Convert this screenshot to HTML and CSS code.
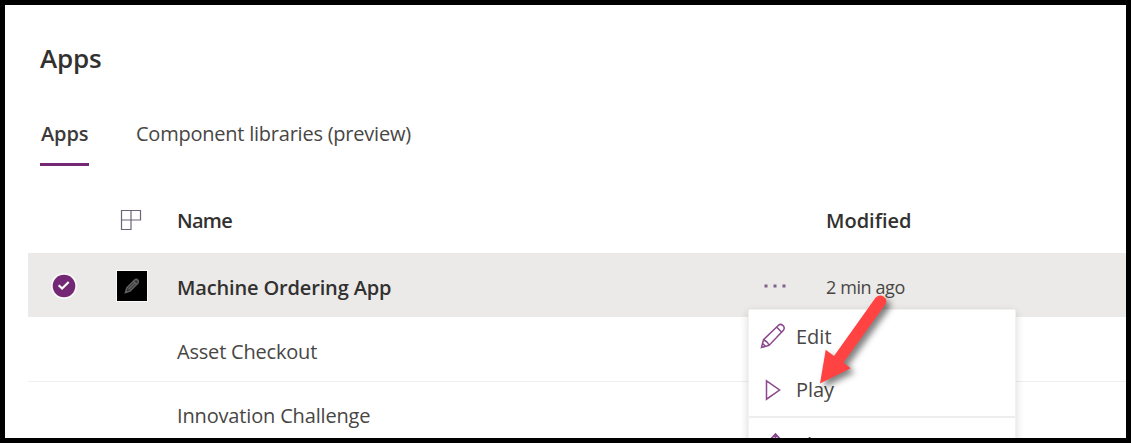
FILE: index.html
```html
<!DOCTYPE html>
<html lang="en">
<head>
<meta charset="utf-8">
<title>Apps</title>
<link rel="stylesheet" href="styles.css">
</head>
<body>
<main class="frame">
  <h1 class="title">Apps</h1>
  <nav class="tabs">
    <a class="tab tab-active">Apps</a>
    <a class="tab tab-preview">Component libraries (preview)</a>
  </nav>
  <section class="table">
    <div class="row head">
      <span></span>
      <svg class="type-icon" width="22" height="22" viewBox="0 0 22 22"><path d="M1.500 1.500H20.500V11H1.500ZM11 1.500V20.500H1.500V11" fill="none" stroke="#6b6478" stroke-width="1.200"/></svg>
      <span class="h-name">Name</span><span></span><span class="h-mod">Modified</span>
    </div>
    <div class="row selected">
      <svg class="check" width="28" height="28" viewBox="0 0 28 28"><circle cx="14" cy="14" r="13" fill="#fafafa"/><circle cx="14" cy="14" r="11.300" fill="#742774"/><path d="M8.700 13.200l3.400 3.300 6.600-6.500" fill="none" stroke="#fff" stroke-width="2.200"/></svg>
      <svg class="app-icon" width="32" height="32" viewBox="0 0 32 32"><path fill="#fafafa" d="M0 0h32v32H0z"/><path fill="#000" d="M1 1h30v30H1z"/><path d="M9.500 22.500l1.300-4.600 8-8q1.700-1.100 3 .2t.2 3l-8 8z" fill="#333" stroke="#606060" stroke-width="1.500"/><path d="M17.500 11.200l3.300 3.300M12.500 19.300l6.600-6.500" fill="none" stroke="#666" stroke-width="1.200"/></svg>
      <span class="name n1">Machine Ordering App</span>
      <svg class="dots" width="26" height="4" viewBox="0 0 26 4"><path d="M2.500 .5h3v3h-3zM11.500 .5h3v3h-3zM20.500 .5h3v3h-3z" fill="#80608a"/></svg>
      <span class="name when">2 min ago</span>
    </div>
    <div class="row line"><span></span><span></span><span class="name n2">Asset Checkout</span></div>
    <div class="row last"><span></span><span></span><span class="name n3">Innovation Challenge</span></div>
  </section>
  <div class="menu">
    <div class="item edit">
      <svg width="26" height="26" viewBox="0 0 26 26"><path d="M1.500 24.500l2-7.800L18.500 2.200q2-1.800 4.500.4 2.200 2.300.4 4.600L9 22.400zM3.500 16.700q3.800 1.500 5.500 5.700M16.700 4.100l4.900 5.200M2.700 20.500l2.700 2.800" fill="none" stroke="#8b478c" stroke-width="1.500"/></svg>
      <span>Edit</span>
    </div>
    <div class="item play">
      <svg width="26" height="26" viewBox="0 0 26 26"><path d="M6.500 3.800L19.600 13 6.500 22.200z" fill="none" stroke="#8b478c" stroke-width="1.500"/></svg>
      <span>Play</span>
    </div>
    <div class="item share">
      <svg width="26" height="26" viewBox="0 0 26 26"><path d="M10.500 7.500l5-5.500 5 5.500M15.500 2v15M10 11H4v13h18V11" fill="none" stroke="#8b478c" stroke-width="1.800"/></svg>
      <span>Share</span>
    </div>
  </div>
  <svg class="arrow" width="100" height="110" viewBox="0 0 100 110"><path d="M75.500 0.700Q79.500-3 83.500-.4 88 2.800 85.500 7.200L43.500 65.500 50.700 71.200 20 86.500 25.700 52.700 34 59z" fill="#ff4343"/></svg>
</main>
</body>
</html>
```
FILE: styles.css
```css
* { box-sizing: border-box; }
body { margin: 0; background: #fff; color: #484644; font: 20px/28px "Open Sans", "Noto Sans", sans-serif; }
.frame { position: relative; height: 443px; border: 5px solid #000; padding: 34px 0 0 23px; overflow: hidden; background: #fff; white-space: nowrap; }
.title { margin: 0 0 0 12px; font-size: 26px; line-height: 38px; font-weight: 600; color: #323130; letter-spacing: -.2px; }
.tabs { display: flex; gap: 47px; margin: 37px 0 0 12px; height: 52px; }
.tab { height: 52px; line-height: 40px; }
.tab-active { width: 49px; padding-left: 1px; font-weight: 600; border-bottom: 3px solid #742774; color: #3b3a39; letter-spacing: -.1px; }
.tab-preview { letter-spacing: -.23px; }
.row { display: grid; grid-template-columns: 88px 61px 585px 64px 1fr; align-items: center; height: 64px; }
.head { margin-top: 23px; font-weight: 600; color: #323130; }
.h-name { letter-spacing: -.7px; }
.h-name, .h-mod { margin-top: -1px; }
.selected { background: #ebeae8; }
.line { height: 65px; border-bottom: 1px solid #efefef; }
.last { height: 63px; }
.type-icon { margin: -2px 0 0 4px; }
.check { margin-left: 22px; }
.app-icon, .check { margin-top: 2px; }
.dots { margin-top: 2px; }
.name { padding-top: 5px; }
.n1 { font-weight: 600; color: #323130; letter-spacing: -.15px; }
.n2 { padding-top: 6px; letter-spacing: -.2px; }
.n3 { letter-spacing: -.16px; }
.when { padding-top: 4px; font-size: 18px; letter-spacing: -.4px; }
.menu { position: absolute; left: 743px; top: 304px; width: 268px; height: 150px; background: #fff; border: 1px solid #f1f1f0; border-radius: 2px; box-shadow: 0 3px 8px rgba(0,0,0,.16); }
.item { display: flex; align-items: center; gap: 10px; height: 53px; padding-left: 11px; }
.edit svg { margin-top: -2px; }
.play { height: 55px; border-bottom: 2px solid #eee; letter-spacing: -.1px; }
.arrow { position: absolute; left: 795px; top: 292px; overflow: visible; filter: drop-shadow(4px 4px 3px rgba(0,0,0,.5)); }
```
